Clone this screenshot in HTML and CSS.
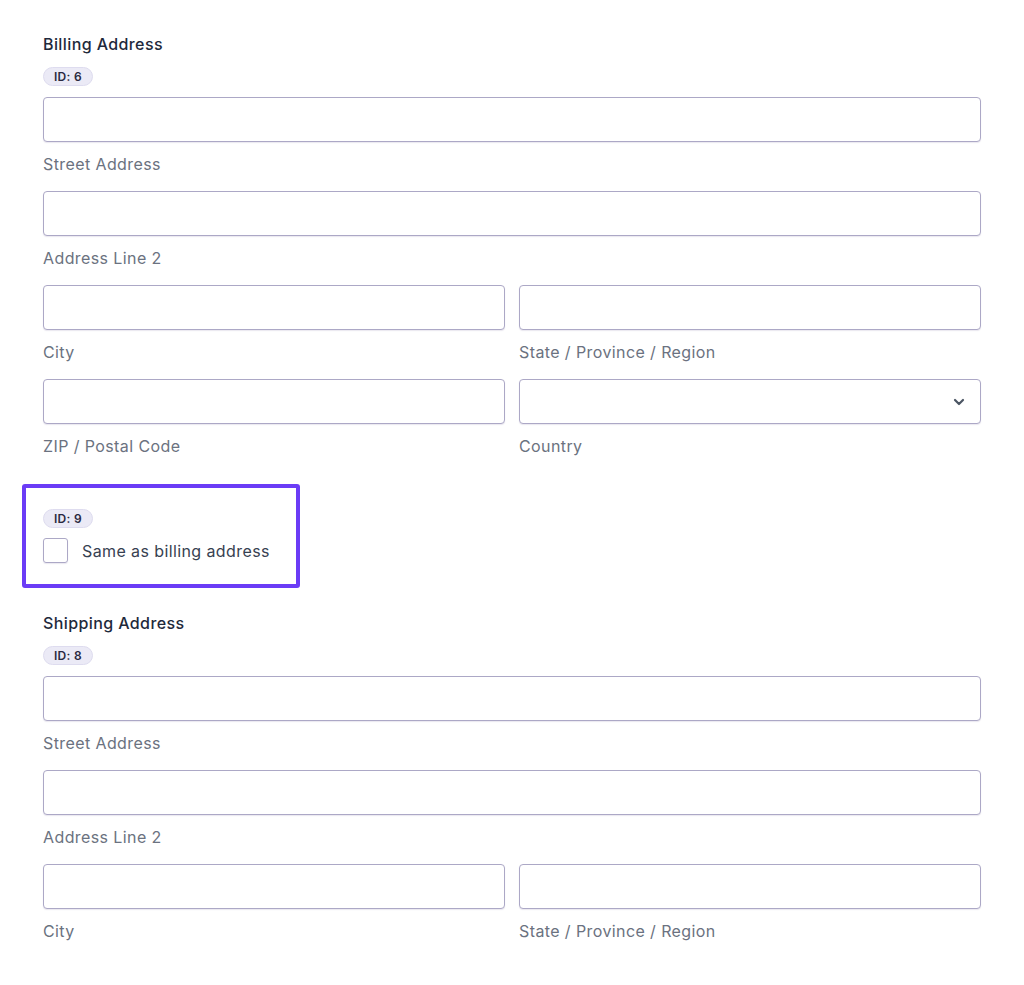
FILE: index.html
```html
<!DOCTYPE html>
<html>
<head>
  <title>Address Form</title>
  <link rel="stylesheet" href="styles.css">
</head>
<body>
  <div class="form">
    <div class="group">
      <div class="group-title">Billing Address</div>
      <span class="badge">ID: 6</span>
      <div class="field">
        <div class="input"></div>
        <div class="label">Street Address</div>
      </div>
      <div class="field">
        <div class="input"></div>
        <div class="label">Address Line 2</div>
      </div>
      <div class="row">
        <div class="field">
          <div class="input"></div>
          <div class="label">City</div>
        </div>
        <div class="field">
          <div class="input"></div>
          <div class="label">State / Province / Region</div>
        </div>
      </div>
      <div class="row">
        <div class="field">
          <div class="input"></div>
          <div class="label">ZIP / Postal Code</div>
        </div>
        <div class="field">
          <div class="input select">
            <svg class="chevron" width="14" height="14" viewBox="0 0 14 14">
              <path d="M3 5l4 4 4-4" fill="none" stroke="#4b5563" stroke-width="2.2" stroke-linecap="round" stroke-linejoin="round"/>
            </svg>
          </div>
          <div class="label">Country</div>
        </div>
      </div>
    </div>

    <div class="selected">
      <span class="badge">ID: 9</span>
      <label class="check">
        <span class="box"></span>
        <span>Same as billing address</span>
      </label>
    </div>

    <div class="group shipping">
      <div class="group-title">Shipping Address</div>
      <span class="badge">ID: 8</span>
      <div class="field">
        <div class="input"></div>
        <div class="label">Street Address</div>
      </div>
      <div class="field">
        <div class="input"></div>
        <div class="label">Address Line 2</div>
      </div>
      <div class="row">
        <div class="field">
          <div class="input"></div>
          <div class="label">City</div>
        </div>
        <div class="field">
          <div class="input"></div>
          <div class="label">State / Province / Region</div>
        </div>
      </div>
    </div>
  </div>
</body>
</html>
```

FILE: styles.css
```css
body {
  margin: 0;
  padding: 0;
  background: #ffffff;
  font-family: Inter, "Liberation Sans", sans-serif;
  color: #1f2937;
}

.form {
  width: 938px;
  padding: 32px 43px 0 43px;
}

.group {
  display: flex;
  flex-direction: column;
  align-items: flex-start;
}

.group-title {
  font-size: 16px;
  line-height: 24px;
  font-weight: 500;
  letter-spacing: 0.4px;
  color: #1e293b;
}

.badge {
  display: inline-flex;
  align-items: center;
  height: 19px;
  box-sizing: border-box;
  padding: 0 10px;
  margin-top: 11px;
  margin-bottom: 11px;
  border-radius: 10px;
  background: #ebeaf6;
  border: 1px solid #dedcef;
  font-size: 12px;
  font-weight: 600;
  letter-spacing: 0.3px;
  color: #2a2940;
}

.field {
  display: flex;
  flex-direction: column;
  width: 100%;
  margin-bottom: 15px;
}

.input {
  height: 45px;
  box-sizing: border-box;
  border: 1px solid #aca8c6;
  border-radius: 4px;
  box-shadow: 0 1px 1px rgba(70, 60, 120, 0.12);
  background: #ffffff;
}

.select {
  display: flex;
  align-items: center;
  justify-content: flex-end;
  padding-right: 14px;
}

.label {
  margin-top: 10px;
  font-size: 16px;
  line-height: 24px;
  letter-spacing: 0.4px;
  color: #6b7280;
}

.row {
  display: grid;
  grid-template-columns: 1fr 1fr;
  column-gap: 14px;
  width: 100%;
}

.selected {
  width: 278px;
  box-sizing: border-box;
  margin: 11px 0 0 -21px;
  padding: 19px 17px 21px 17px;
  border: 4px solid #6b3cf6;
  border-radius: 3px;
}

.selected .badge {
  margin-top: 0;
  margin-bottom: 10px;
}

.check {
  display: flex;
  align-items: center;
  gap: 14px;
  font-size: 16px;
  line-height: 24px;
  letter-spacing: 0.4px;
  color: #374151;
}

.box {
  width: 25px;
  height: 25px;
  box-sizing: border-box;
  border: 1px solid #aca8c6;
  border-radius: 3px;
  box-shadow: 0 1px 1px rgba(70, 60, 120, 0.12);
}

.shipping {
  margin-top: 23px;
}
```
